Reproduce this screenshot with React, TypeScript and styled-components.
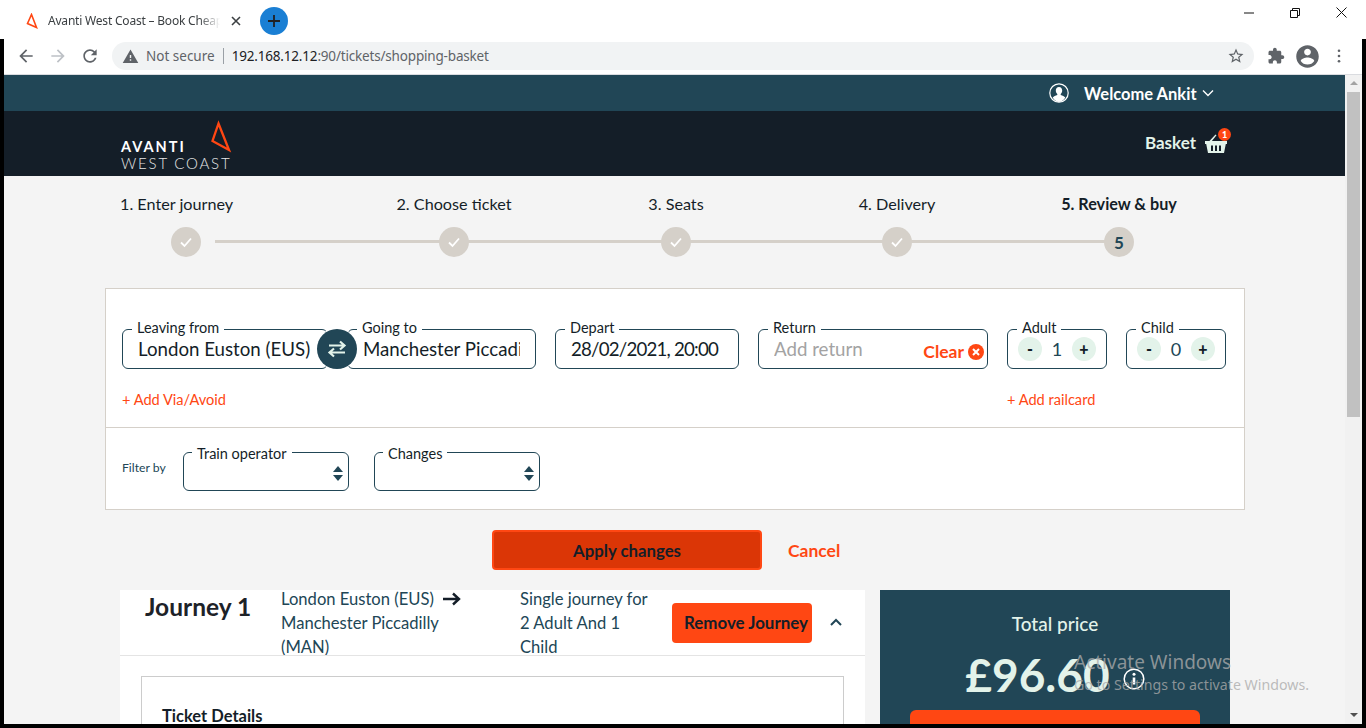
import React from "react";
import styled, { createGlobalStyle } from "styled-components";

const Global = createGlobalStyle`
  html, body { margin: 0; padding: 0; height: 100%; overflow: hidden; background: #000; }
  * { box-sizing: border-box; }
  body { font-family: Lato, "Open Sans", Arial, sans-serif; color: #141e28; }
`;

const Shell = styled.div`
  position: relative;
  width: 1366px;
  height: 728px;
  display: flex;
  flex-direction: column;
  overflow: hidden;
`;

const TabStrip = styled.div`
  height: 39px;
  background: #fff;
  display: flex;
  align-items: center;
  padding-left: 26px;
  padding-top: 2px;
  flex: none;
`;
const Favicon = styled.svg`
  width: 12px;
  height: 16px;
  margin-right: 10px;
  flex: none;
`;
const TabTitle = styled.div`
  width: 172px;
  font: 12px "Noto Sans", "Open Sans", sans-serif;
  letter-spacing: -0.2px;
  color: #3c4043;
  white-space: nowrap;
  overflow: hidden;
  -webkit-mask-image: linear-gradient(90deg, #000 88%, transparent);
  mask-image: linear-gradient(90deg, #000 88%, transparent);
`;
const TabClose = styled.svg`
  width: 10px;
  height: 10px;
  margin-left: 11px;
  flex: none;
`;
const NewTab = styled.div`
  width: 28px;
  height: 28px;
  border-radius: 50%;
  background: #1a7fd4;
  margin-left: 19px;
  display: flex;
  align-items: center;
  justify-content: center;
  flex: none;
`;
const WindowControls = styled.div`
  margin-left: auto;
  margin-right: 2px;
  margin-top: -2px;
  align-self: flex-start;
  display: flex;
`;
const WindowButton = styled.div`
  width: 46px;
  height: 25px;
  display: flex;
  align-items: center;
  justify-content: center;
`;

const Frame = styled.div`
  flex: 1;
  min-height: 0;
  display: flex;
  flex-direction: column;
  border: 4px solid #000;
  border-top: 0;
`;

const Toolbar = styled.div`
  height: 36px;
  flex: none;
  background: #fff;
  border-bottom: 1px solid #dadce0;
  display: flex;
  align-items: center;
  padding-left: 12px;
  padding-bottom: 1px;
`;
const ChromeIcon = styled.svg<{ $size?: number; $gap?: number }>`
  width: ${(p) => p.$size ?? 20}px;
  height: ${(p) => p.$size ?? 20}px;
  margin-right: ${(p) => p.$gap ?? 0}px;
  flex: none;
`;
const Omnibox = styled.div`
  width: 1142px;
  height: 28px;
  margin-left: 12px;
  margin-right: 13px;
  border-radius: 14px;
  background: #f1f3f4;
  display: flex;
  align-items: center;
  padding-left: 10px;
  padding-right: 9px;
  flex: none;
  font: 13.5px "Noto Sans", "Open Sans", sans-serif;
`;
const NotSecure = styled.span`
  color: #5f6368;
  margin-left: 7px;
`;
const OmniDivider = styled.span`
  width: 1px;
  height: 16px;
  background: #9aa0a6;
  margin: 0 8px;
`;
const UrlHost = styled.span`
  color: #202124;
  letter-spacing: -0.18px;
`;
const UrlPath = styled.span`
  color: #5f6368;
  letter-spacing: -0.18px;
`;
const OmniEnd = styled.span`
  margin-left: auto;
  display: flex;
`;

const Viewport = styled.div`
  flex: 1;
  min-height: 0;
  display: flex;
`;
const Page = styled.div`
  flex: 1;
  min-width: 0;
  background: #f4f4f4;
  overflow: hidden;
`;
const Scrollbar = styled.div`
  width: 17px;
  flex: none;
  background: #f1f1f1;
  display: flex;
  flex-direction: column;
  align-items: center;
  padding-top: 6px;
`;
const ScrollArrow = styled.div<{ $down?: boolean }>`
  width: 0;
  height: 0;
  border-left: 4px solid transparent;
  border-right: 4px solid transparent;
  ${(p) => (p.$down ? "border-top: 4px solid #505050; margin-top: auto; margin-bottom: 7px;" : "border-bottom: 4px solid #a3a3a3;")}
`;
const ScrollThumb = styled.div`
  width: 13px;
  height: 325px;
  margin-top: 7px;
  background: #c1c1c1;
`;

const TopBar = styled.div`
  height: 36px;
  background: #214656;
  display: flex;
  align-items: center;
  padding-left: 1045px;
  color: #fff;
  font-weight: 700;
  font-size: 16.5px;
`;
const WelcomeText = styled.span`
  margin-left: 15px;
  margin-right: 5px;
  margin-top: 1px;
  white-space: nowrap;
`;
const Header = styled.div`
  height: 65px;
  background: #141e28;
  display: flex;
  align-items: center;
  padding-left: 117px;
`;
const Logo = styled.div`
  position: relative;
  width: 112px;
  height: 50px;
  padding-top: 20px;
`;
const LogoMark = styled.svg`
  position: absolute;
  left: 88px;
  top: 0;
  width: 24px;
  height: 36px;
`;
const LogoTop = styled.div`
  font-size: 14.5px;
  line-height: 16px;
  font-weight: 700;
  letter-spacing: 2px;
  color: #fff;
`;
const LogoBottom = styled.div`
  font-size: 15px;
  line-height: 16px;
  font-weight: 300;
  letter-spacing: 1.8px;
  color: #e6e6e6;
  white-space: nowrap;
`;
const BasketLink = styled.div`
  margin-left: auto;
  margin-right: 117px;
  display: flex;
  align-items: center;
  color: #e3f3ea;
  font-weight: 700;
  font-size: 17px;
`;
const BasketLabel = styled.span`
  margin-top: -3px;
`;
const BasketIconWrap = styled.div`
  position: relative;
  width: 24px;
  height: 24px;
  margin-left: 8px;
`;
const Badge = styled.span`
  position: absolute;
  right: -3px;
  top: -4px;
  width: 13px;
  height: 13px;
  border-radius: 50%;
  background: #ff4713;
  color: #fff;
  font-size: 9px;
  font-weight: 900;
  line-height: 13px;
  text-align: center;
`;

const Stepper = styled.div`
  height: 112px;
  padding-left: 116px;
  padding-top: 18px;
  display: flex;
`;
const Track = styled.div`
  position: relative;
  display: flex;
`;
const TrackLine = styled.div`
  position: absolute;
  left: 95px;
  top: 46px;
  width: 890px;
  height: 3px;
  background: #d5d0c9;
`;
const Step = styled.div<{ $w: number; $first?: boolean }>`
  position: relative;
  width: ${(p) => p.$w}px;
  display: flex;
  flex-direction: column;
  align-items: ${(p) => (p.$first ? "flex-start" : "center")};
`;
const StepLabel = styled.div<{ $active?: boolean }>`
  font-size: 16.2px;
  line-height: 20px;
  font-weight: ${(p) => (p.$active ? 700 : 400)};
  white-space: nowrap;
  color: #141e28;
`;
const StepDot = styled.div<{ $first?: boolean }>`
  width: 30px;
  height: 30px;
  margin-top: 13px;
  margin-left: ${(p) => (p.$first ? 51 : 0)}px;
  border-radius: 50%;
  background: #d5d0c9;
  display: flex;
  align-items: center;
  justify-content: center;
  font-weight: 700;
  font-size: 17px;
  color: #214656;
`;

const Panel = styled.div`
  width: 1140px;
  height: 222px;
  margin-left: 101px;
  background: #fff;
  border: 1px solid #d5d0c9;
  display: flex;
  flex-direction: column;
`;
const SearchSection = styled.div`
  height: 139px;
  padding: 40px 18px 0 16px;
  border-bottom: 1px solid #d5d0c9;
`;
const FieldRow = styled.div`
  position: relative;
  display: flex;
`;
const Field = styled.div<{ $w: number; $gap?: number }>`
  position: relative;
  width: ${(p) => p.$w}px;
  height: 40px;
  margin-right: ${(p) => p.$gap ?? 19}px;
  border: 1px solid #214656;
  border-radius: 6px;
  display: flex;
  align-items: center;
  padding: 0 15px;
  flex: none;
`;
const FieldLabel = styled.span<{ $low?: boolean }>`
  position: absolute;
  left: ${(p) => (p.$low ? 8 : 9)}px;
  top: ${(p) => (p.$low ? -8 : -11)}px;
  padding: 0 5px;
  background: #fff;
  font-size: 14.5px;
  line-height: 18px;
  color: #141e28;
  white-space: nowrap;
`;
const FieldValue = styled.span<{ $muted?: boolean; $tight?: boolean }>`
  font-size: 18.7px;
  line-height: 24px;
  letter-spacing: ${(p) => (p.$tight ? "-0.8px" : "0")};
  color: ${(p) => (p.$muted ? "#a3a3a3" : "#141e28")};
  white-space: nowrap;
  overflow: hidden;
  flex: 1;
`;
const ClearLink = styled.span`
  position: absolute;
  right: 3px;
  top: 12px;
  display: flex;
  align-items: center;
  gap: 4px;
  color: #ff4713;
  font-weight: 700;
  font-size: 17.5px;
  line-height: 20px;
`;
const SwapButton = styled.div`
  position: absolute;
  left: 195px;
  top: 0;
  width: 40px;
  height: 40px;
  border-radius: 50%;
  background: #214656;
  box-shadow: 0 0 0 1px #fff;
  display: flex;
  align-items: center;
  justify-content: center;
`;
const Counter = styled.div`
  flex: 1;
  display: flex;
  align-items: center;
  justify-content: space-between;
  margin: 0 -5px;
`;
const CounterButton = styled.span`
  width: 24px;
  height: 24px;
  border-radius: 50%;
  background: #e3f3ea;
  color: #141e28;
  font-weight: 900;
  font-size: 16px;
  line-height: 23px;
  text-align: center;
`;
const CounterValue = styled.span`
  font-size: 18px;
  color: #214656;
`;
const LinkRow = styled.div`
  display: flex;
  justify-content: space-between;
  margin-top: 22px;
`;
const AddLink = styled.span<{ $w: number }>`
  width: ${(p) => p.$w}px;
  color: #ff4713;
  font-size: 14.6px;
  line-height: 18px;
`;
const FilterSection = styled.div`
  flex: 1;
  display: flex;
  align-items: flex-start;
  padding: 24px 0 0 16px;
`;
const FilterLabel = styled.span`
  width: 61px;
  font-size: 12.2px;
  line-height: 32px;
  color: #214656;
`;
const SelectBox = styled.div`
  position: relative;
  width: 166px;
  height: 39px;
  margin-right: 25px;
  border: 1px solid #214656;
  border-radius: 6px;
`;
const SelectArrows = styled.svg`
  position: absolute;
  right: 4px;
  top: 13px;
  width: 12px;
  height: 15px;
`;

const ApplyRow = styled.div`
  height: 80px;
  display: flex;
  align-items: center;
  padding-left: 488px;
`;
const ApplyButton = styled.div`
  width: 270px;
  height: 40px;
  background: #db3606;
  border: 2px solid #ff4713;
  border-radius: 4px;
  color: #141e28;
  font-weight: 700;
  font-size: 16.8px;
  display: flex;
  align-items: center;
  justify-content: center;
`;
const CancelLink = styled.span`
  margin-left: 26px;
  color: #ff4713;
  font-weight: 700;
  font-size: 17.5px;
`;

const Content = styled.div`
  display: flex;
  align-items: flex-start;
  padding-left: 116px;
  gap: 15px;
`;
const JourneyCard = styled.div`
  width: 745px;
  height: 200px;
  background: #fff;
`;
const JourneyHead = styled.div`
  height: 66px;
  display: flex;
  border-bottom: 1px solid #e4e4e4;
  overflow: hidden;
`;
const JourneyTitle = styled.div`
  width: 161px;
  padding-left: 25px;
  padding-top: 2px;
  font-size: 24.5px;
  line-height: 30px;
  font-weight: 700;
  color: #1d2228;
  white-space: nowrap;
`;
const JourneyText = styled.div<{ $w: number; $pad?: number }>`
  width: ${(p) => p.$w}px;
  margin-top: -3px;
  padding-right: ${(p) => p.$pad ?? 0}px;
  font-size: 16.6px;
  line-height: 24px;
  color: #214656;
  flex: none;
`;
const RouteArrow = styled.svg`
  width: 19px;
  height: 14px;
  margin-left: 8px;
  vertical-align: -1px;
`;
const RemoveButton = styled.div`
  width: 140px;
  height: 40px;
  margin-top: 13px;
  padding-left: 12px;
  background: #ff4713;
  border-radius: 4px;
  color: #141e28;
  font-weight: 700;
  font-size: 16.9px;
  line-height: 40px;
  white-space: nowrap;
  flex: none;
`;
const Collapse = styled.svg`
  width: 14px;
  height: 10px;
  margin: 27px 0 0 17px;
  flex: none;
`;
const TicketBox = styled.div`
  width: 703px;
  height: 120px;
  margin: 20px 0 0 21px;
  border: 1px solid #ccc;
  padding: 29px 20px 0;
  font-size: 16.5px;
  line-height: 20px;
  font-weight: 700;
  color: #141e28;
`;
const Summary = styled.div`
  width: 350px;
  height: 200px;
  background: #214656;
  color: #e3f3ea;
  display: flex;
  flex-direction: column;
  align-items: center;
  padding-top: 21px;
`;
const TotalLabel = styled.div`
  font-size: 19px;
  line-height: 26px;
  font-weight: 500;
`;
const PriceRow = styled.div`
  display: flex;
  align-items: center;
  margin-top: 8px;
  height: 60px;
`;
const Price = styled.div`
  font-size: 46px;
  line-height: 60px;
  font-weight: 700;
`;
const InfoIcon = styled.svg`
  width: 22px;
  height: 22px;
  margin: 8px 0 0 13px;
`;
const CheckoutButton = styled.div`
  width: 290px;
  height: 60px;
  margin-top: 5px;
  background: #ff4713;
  border-radius: 6px;
`;

const Watermark = styled.div`
  position: absolute;
  left: 1074px;
  top: 649px;
  color: rgba(170, 170, 170, 0.78);
  font-family: "Noto Sans", "Open Sans", sans-serif;
  pointer-events: none;
  white-space: nowrap;
`;
const WatermarkTitle = styled.div`
  font-size: 19px;
  line-height: 26px;
`;
const WatermarkSub = styled.div`
  font-size: 14.2px;
  line-height: 20px;
`;

const Check = () => (
  <svg width="14" height="12" viewBox="0 0 14 12" fill="none">
    <path d="M2 6.5l3.5 3.5L12 2.5" stroke="#fff" strokeWidth="1.8" />
  </svg>
);

const Arrows = () => (
  <SelectArrows viewBox="0 0 12 15">
    <path d="M6 0l5 6H1z" fill="#214656" />
    <path d="M6 15l5-6H1z" fill="#214656" />
  </SelectArrows>
);

export default function App() {
  return (
    <Shell>
      <Global />
      <TabStrip>
        <Favicon viewBox="0 0 12 16" fill="none">
          <path d="M5.5 1.5L10.5 14.5 1.5 10.5z" stroke="#ff4713" strokeWidth="1.6" />
        </Favicon>
        <TabTitle>Avanti West Coast – Book Cheap Train Tickets</TabTitle>
        <TabClose viewBox="0 0 10 10">
          <path d="M1 1l8 8M9 1l-8 8" stroke="#3c4043" strokeWidth="1.6" />
        </TabClose>
        <NewTab>
          <svg width="14" height="14" viewBox="0 0 14 14">
            <path d="M7 1v12M1 7h12" stroke="#202124" strokeWidth="1.8" />
          </svg>
        </NewTab>
        <WindowControls>
          <WindowButton>
            <svg width="10" height="10" viewBox="0 0 10 10">
              <path d="M0 5h10" stroke="#111" />
            </svg>
          </WindowButton>
          <WindowButton>
            <svg width="10" height="10" viewBox="0 0 10 10" fill="none">
              <path d="M.5 2.5h7v7h-7zM2.5 2.5v-2h7v7h-2" stroke="#111" />
            </svg>
          </WindowButton>
          <WindowButton>
            <svg width="11" height="11" viewBox="0 0 11 11">
              <path d="M.5.5l10 10M10.5.5l-10 10" stroke="#111" />
            </svg>
          </WindowButton>
        </WindowControls>
      </TabStrip>
      <Frame>
        <Toolbar>
          <ChromeIcon viewBox="0 0 24 24" fill="#5f6368" $gap={12}>
            <path d="M20 11H7.83l5.59-5.59L12 4l-8 8 8 8 1.41-1.41L7.83 13H20v-2z" />
          </ChromeIcon>
          <ChromeIcon viewBox="0 0 24 24" fill="#bdc1c6" $gap={12}>
            <path d="M12 4l-1.41 1.41L16.17 11H4v2h12.17l-5.58 5.59L12 20l8-8z" />
          </ChromeIcon>
          <ChromeIcon viewBox="0 0 24 24" fill="#5f6368">
            <path d="M17.65 6.35C16.2 4.9 14.21 4 12 4c-4.42 0-7.99 3.58-7.99 8s3.57 8 7.99 8c3.73 0 6.84-2.55 7.73-6h-2.08c-.82 2.33-3.04 4-5.65 4-3.31 0-6-2.69-6-6s2.69-6 6-6c1.66 0 3.14.69 4.22 1.78L13 11h7V4l-2.35 2.35z" />
          </ChromeIcon>
          <Omnibox>
            <ChromeIcon viewBox="0 0 24 24" fill="#5f6368" $size={17}>
              <path d="M1 21h22L12 2 1 21zm12-3h-2v-2h2v2zm0-4h-2v-4h2v4z" />
            </ChromeIcon>
            <NotSecure>Not secure</NotSecure>
            <OmniDivider />
            <UrlHost>192.168.12.12</UrlHost>
            <UrlPath>:90/tickets/shopping-basket</UrlPath>
            <OmniEnd>
              <ChromeIcon viewBox="0 0 24 24" fill="#5f6368" $size={18}>
                <path d="M22 9.24l-7.19-.62L12 2 9.19 8.63 2 9.24l5.46 4.73L5.82 21 12 17.27 18.18 21l-1.63-7.03L22 9.24zM12 15.4l-3.76 2.27 1-4.28-3.32-2.88 4.38-.38L12 6.1l1.71 4.04 4.38.38-3.32 2.88 1 4.28L12 15.4z" />
              </ChromeIcon>
            </OmniEnd>
          </Omnibox>
          <ChromeIcon viewBox="0 0 24 24" fill="#5f6368" $size={18} $gap={9}>
            <path d="M20.5 11H19V7c0-1.1-.9-2-2-2h-4V3.5C13 2.12 11.88 1 10.5 1S8 2.12 8 3.5V5H4c-1.1 0-1.99.9-1.99 2v3.8H3.5c1.49 0 2.7 1.21 2.7 2.7s-1.21 2.7-2.7 2.7H2V20c0 1.1.9 2 2 2h3.8v-1.5c0-1.49 1.21-2.7 2.7-2.7 1.49 0 2.7 1.21 2.7 2.7V22H17c1.1 0 2-.9 2-2v-4h1.5c1.38 0 2.5-1.12 2.5-2.5S21.88 11 20.5 11z" />
          </ChromeIcon>
          <ChromeIcon viewBox="0 0 24 24" fill="#5f6368" $size={27} $gap={11}>
            <path d="M12 2C6.48 2 2 6.48 2 12s4.48 10 10 10 10-4.48 10-10S17.52 2 12 2zm0 3c1.66 0 3 1.34 3 3s-1.34 3-3 3-3-1.34-3-3 1.34-3 3-3zm0 14.2c-2.5 0-4.71-1.28-6-3.22.03-1.99 4-3.08 6-3.08 1.99 0 5.97 1.09 6 3.08-1.29 1.94-3.5 3.22-6 3.22z" />
          </ChromeIcon>
          <ChromeIcon viewBox="0 0 4 16" fill="#5f6368" $size={14}>
            <circle cx="2" cy="2" r="1.5" />
            <circle cx="2" cy="8" r="1.5" />
            <circle cx="2" cy="14" r="1.5" />
          </ChromeIcon>
        </Toolbar>
        <Viewport>
          <Page>
            <TopBar>
              <svg width="20" height="20" viewBox="0 0 20 20" fill="none">
                <circle cx="10" cy="10" r="9.2" stroke="#fff" strokeWidth="1.2" />
                <path d="M10 4c-2 0-3.2 1.5-3.2 3.6 0 1.4.6 2.6 1.5 3.3v1c-1.8.6-3.6 1.3-4.6 2.5A8.8 8.8 0 0010 19a8.8 8.8 0 006.3-4.6c-1-1.2-2.8-1.9-4.6-2.5v-1c.9-.7 1.5-1.9 1.5-3.3C13.2 5.5 12 4 10 4z" fill="#fff" />
              </svg>
              <WelcomeText>Welcome Ankit</WelcomeText>
              <svg width="12" height="8" viewBox="0 0 12 8" fill="none">
                <path d="M1 1.5l5 5 5-5" stroke="#fff" strokeWidth="1.4" />
              </svg>
            </TopBar>
            <Header>
              <Logo>
                <LogoMark viewBox="0 0 24 36" fill="none">
                  <path d="M9.5 4.500L20 31 3.500 22z" stroke="#ff4713" strokeWidth="2.3" />
                </LogoMark>
                <LogoTop>AVANTI</LogoTop>
                <LogoBottom>WEST COAST</LogoBottom>
              </Logo>
              <BasketLink>
                <BasketLabel>Basket</BasketLabel>
                <BasketIconWrap>
                  <svg width="24" height="24" viewBox="0 0 24 24" fill="#e3f3ea">
                    <path d="M5 9.500l6.500-7 1 .8L7.500 9.500z" />
                    <path fillRule="evenodd" d="M1 9h22v3h-1.200l-1.800 9H4l-1.800-9H1zM7 13.500v5.500h2v-5.500zM11 13.500v5.500h2v-5.500zM15 13.500v5.500h2v-5.500z" />
                  </svg>
                  <Badge>1</Badge>
                </BasketIconWrap>
              </BasketLink>
            </Header>
            <Stepper>
              <Track>
                <TrackLine />
                <Step $w={200} $first>
                  <StepLabel>1. Enter journey</StepLabel>
                  <StepDot $first><Check /></StepDot>
                </Step>
                <Step $w={268}>
                  <StepLabel>2. Choose ticket</StepLabel>
                  <StepDot><Check /></StepDot>
                </Step>
                <Step $w={176}>
                  <StepLabel>3. Seats</StepLabel>
                  <StepDot><Check /></StepDot>
                </Step>
                <Step $w={266}>
                  <StepLabel>4. Delivery</StepLabel>
                  <StepDot><Check /></StepDot>
                </Step>
                <Step $w={178}>
                  <StepLabel $active>5. Review &amp; buy</StepLabel>
                  <StepDot>5</StepDot>
                </Step>
              </Track>
            </Stepper>
            <Panel>
              <SearchSection>
                <FieldRow>
                  <Field $w={206}>
                    <FieldLabel>Leaving from</FieldLabel>
                    <FieldValue>London Euston (EUS)</FieldValue>
                  </Field>
                  <Field $w={189}>
                    <FieldLabel>Going to</FieldLabel>
                    <FieldValue>Manchester Piccadilly (MAN)</FieldValue>
                  </Field>
                  <Field $w={184}>
                    <FieldLabel>Depart</FieldLabel>
                    <FieldValue $tight>28/02/2021, 20:00</FieldValue>
                  </Field>
                  <Field $w={230}>
                    <FieldLabel>Return</FieldLabel>
                    <FieldValue $muted>Add return</FieldValue>
                    <ClearLink>
                      Clear
                      <svg width="16" height="16" viewBox="0 0 16 16">
                        <circle cx="8" cy="8" r="8" fill="#ff4713" />
                        <path d="M5 5l6 6M11 5l-6 6" stroke="#fff" strokeWidth="2" />
                      </svg>
                    </ClearLink>
                  </Field>
                  <Field $w={100}>
                    <FieldLabel>Adult</FieldLabel>
                    <Counter>
                      <CounterButton>-</CounterButton>
                      <CounterValue>1</CounterValue>
                      <CounterButton>+</CounterButton>
                    </Counter>
                  </Field>
                  <Field $w={100} $gap={0}>
                    <FieldLabel>Child</FieldLabel>
                    <Counter>
                      <CounterButton>-</CounterButton>
                      <CounterValue>0</CounterValue>
                      <CounterButton>+</CounterButton>
                    </Counter>
                  </Field>
                  <SwapButton>
                    <svg width="22" height="18" viewBox="0 0 22 18" fill="none" stroke="#e3f3ea" strokeWidth="2.2">
                      <path d="M3 5.500h15M14 1.500L18.500 5.500 14 9.500" />
                      <path d="M19 12.500H4M8 8.500L3.500 12.500 8 16.500" />
                    </svg>
                  </SwapButton>
                </FieldRow>
                <LinkRow>
                  <AddLink $w={200}>+ Add Via/Avoid</AddLink>
                  <AddLink $w={219}>+ Add railcard</AddLink>
                </LinkRow>
              </SearchSection>
              <FilterSection>
                <FilterLabel>Filter by</FilterLabel>
                <SelectBox>
                  <FieldLabel $low>Train operator</FieldLabel>
                  <Arrows />
                </SelectBox>
                <SelectBox>
                  <FieldLabel $low>Changes</FieldLabel>
                  <Arrows />
                </SelectBox>
              </FilterSection>
            </Panel>
            <ApplyRow>
              <ApplyButton>Apply changes</ApplyButton>
              <CancelLink>Cancel</CancelLink>
            </ApplyRow>
            <Content>
              <JourneyCard>
                <JourneyHead>
                  <JourneyTitle>Journey 1</JourneyTitle>
                  <JourneyText $w={239}>
                    London Euston (EUS)
                    <RouteArrow viewBox="0 0 19 14" fill="none" stroke="#141e28" strokeWidth="2.4">
                      <path d="M1 7h15M11 1.500L17 7l-6 5.500" />
                    </RouteArrow>
                    <br />
                    Manchester Piccadilly
                    <br />
                    (MAN)
                  </JourneyText>
                  <JourneyText $w={152} $pad={16}>Single journey for 2 Adult And 1 Child</JourneyText>
                  <RemoveButton>Remove Journey</RemoveButton>
                  <Collapse viewBox="0 0 14 10" fill="none" stroke="#214656" strokeWidth="2">
                    <path d="M2 8l5-5 5 5" />
                  </Collapse>
                </JourneyHead>
                <TicketBox>Ticket Details</TicketBox>
              </JourneyCard>
              <Summary>
                <TotalLabel>Total price</TotalLabel>
                <PriceRow>
                  <Price>£96.60</Price>
                  <InfoIcon viewBox="0 0 22 22" fill="none">
                    <circle cx="11" cy="11" r="9.8" stroke="#fff" strokeWidth="1.5" />
                    <path d="M11 9.500v7" stroke="#fff" strokeWidth="2.6" />
                    <circle cx="11" cy="6.300" r="1.5" fill="#fff" />
                  </InfoIcon>
                </PriceRow>
                <CheckoutButton />
              </Summary>
            </Content>
          </Page>
          <Scrollbar>
            <ScrollArrow />
            <ScrollThumb />
            <ScrollArrow $down />
          </Scrollbar>
        </Viewport>
      </Frame>
      <Watermark>
        <WatermarkTitle>Activate Windows</WatermarkTitle>
        <WatermarkSub>Go to Settings to activate Windows.</WatermarkSub>
      </Watermark>
    </Shell>
  );
}
